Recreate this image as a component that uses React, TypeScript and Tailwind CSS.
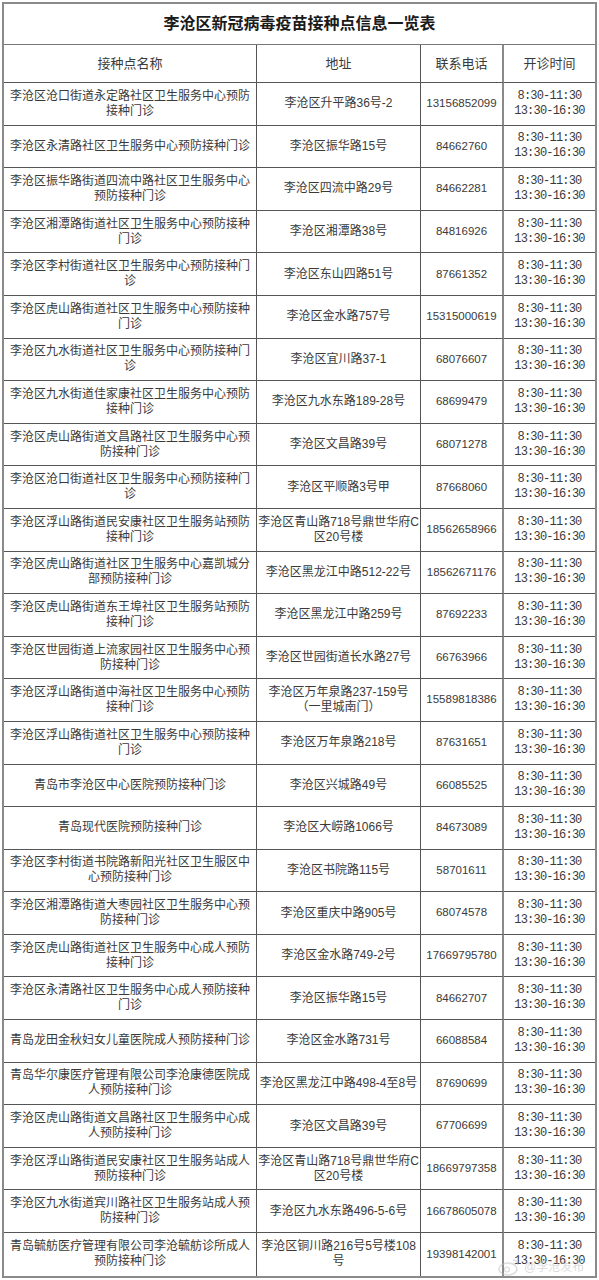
type Row = {
    name: string[];
    address: string[];
    phone: string;
};

const rows: Row[] = [
    { name: ['李沧区沧口街道永定路社区卫生服务中心预防', '接种门诊'], address: ['李沧区升平路36号-2'], phone: '13156852099' },
    { name: ['李沧区永清路社区卫生服务中心预防接种门诊'], address: ['李沧区振华路15号'], phone: '84662760' },
    { name: ['李沧区振华路街道四流中路社区卫生服务中心', '预防接种门诊'], address: ['李沧区四流中路29号'], phone: '84662281' },
    { name: ['李沧区湘潭路街道社区卫生服务中心预防接种', '门诊'], address: ['李沧区湘潭路38号'], phone: '84816926' },
    { name: ['李沧区李村街道社区卫生服务中心预防接种门', '诊'], address: ['李沧区东山四路51号'], phone: '87661352' },
    { name: ['李沧区虎山路街道社区卫生服务中心预防接种', '门诊'], address: ['李沧区金水路757号'], phone: '15315000619' },
    { name: ['李沧区九水街道社区卫生服务中心预防接种门', '诊'], address: ['李沧区宜川路37-1'], phone: '68076607' },
    { name: ['李沧区九水街道佳家康社区卫生服务中心预防', '接种门诊'], address: ['李沧区九水东路189-28号'], phone: '68699479' },
    { name: ['李沧区虎山路街道文昌路社区卫生服务中心预', '防接种门诊'], address: ['李沧区文昌路39号'], phone: '68071278' },
    { name: ['李沧区沧口街道社区卫生服务中心预防接种门', '诊'], address: ['李沧区平顺路3号甲'], phone: '87668060' },
    { name: ['李沧区浮山路街道民安康社区卫生服务站预防', '接种门诊'], address: ['李沧区青山路718号鼎世华府C', '区20号楼'], phone: '18562658966' },
    { name: ['李沧区虎山路街道社区卫生服务中心嘉凯城分', '部预防接种门诊'], address: ['李沧区黑龙江中路512-22号'], phone: '18562671176' },
    { name: ['李沧区虎山路街道东王埠社区卫生服务站预防', '接种门诊'], address: ['李沧区黑龙江中路259号'], phone: '87692233' },
    { name: ['李沧区世园街道上流家园社区卫生服务中心预', '防接种门诊'], address: ['李沧区世园街道长水路27号'], phone: '66763966' },
    { name: ['李沧区浮山路街道中海社区卫生服务中心预防', '接种门诊'], address: ['李沧区万年泉路237-159号', '（一里城南门）'], phone: '15589818386' },
    { name: ['李沧区浮山路街道社区卫生服务中心预防接种', '门诊'], address: ['李沧区万年泉路218号'], phone: '87631651' },
    { name: ['青岛市李沧区中心医院预防接种门诊'], address: ['李沧区兴城路49号'], phone: '66085525' },
    { name: ['青岛现代医院预防接种门诊'], address: ['李沧区大崂路1066号'], phone: '84673089' },
    { name: ['李沧区李村街道书院路新阳光社区卫生服区中', '心预防接种门诊'], address: ['李沧区书院路115号'], phone: '58701611' },
    { name: ['李沧区湘潭路街道大枣园社区卫生服务中心预', '防接种门诊'], address: ['李沧区重庆中路905号'], phone: '68074578' },
    { name: ['李沧区虎山路街道社区卫生服务中心成人预防', '接种门诊'], address: ['李沧区金水路749-2号'], phone: '17669795780' },
    { name: ['李沧区永清路社区卫生服务中心成人预防接种', '门诊'], address: ['李沧区振华路15号'], phone: '84662707' },
    { name: ['青岛龙田金秋妇女儿童医院成人预防接种门诊'], address: ['李沧区金水路731号'], phone: '66088584' },
    { name: ['青岛华尔康医疗管理有限公司李沧康德医院成', '人预防接种门诊'], address: ['李沧区黑龙江中路498-4至8号'], phone: '87690699' },
    { name: ['李沧区虎山路街道文昌路社区卫生服务中心成', '人预防接种门诊'], address: ['李沧区文昌路39号'], phone: '67706699' },
    { name: ['李沧区浮山路街道民安康社区卫生服务站成人', '预防接种门诊'], address: ['李沧区青山路718号鼎世华府C', '区20号楼'], phone: '18669797358' },
    { name: ['李沧区九水街道宾川路社区卫生服务站成人预', '防接种门诊'], address: ['李沧区九水东路496-5-6号'], phone: '16678605078' },
    { name: ['青岛毓舫医疗管理有限公司李沧毓舫诊所成人', '预防接种门诊'], address: ['李沧区铜川路216号5号楼108', '号'], phone: '19398142001' },
];

const font = "font-['Liberation_Sans','Noto_Sans_CJK_SC',sans-serif]";

function Lines({ lines }: { lines: string[] }) {
    return (
        <div className="leading-[15px]">
            {lines.map((line, index) => (
                <div key={index} className="whitespace-nowrap">
                    {line}
                </div>
            ))}
        </div>
    );
}

export default function App() {
    return (
        <div className={`relative min-h-[1280px] w-[599px] bg-white ${font}`}>
            <div className="ml-[2px] pt-[2px]">
                <div className="grid w-[595px] grid-cols-[253px_164px_83px_91px] grid-rows-[41px_38px_repeat(28,42.6px)] border-2 border-[#8a8a8a] text-[#3a3a3a]">
                    <div className="col-span-4 flex items-center justify-center border-b border-[#777] text-[16px] font-bold text-[#1a1a1a]">
                        李沧区新冠病毒疫苗接种点信息一览表
                    </div>

                    <div className="flex items-center justify-center border-r border-b border-[#555] text-[13px]">
                        接种点名称
                    </div>
                    <div className="flex items-center justify-center border-r border-b border-[#555] text-[13px]">
                        地址
                    </div>
                    <div className="flex items-center justify-center border-r-2 border-b border-r-[#8a8a8a] border-b-[#555] text-[13px]">
                        联系电话
                    </div>
                    <div className="flex items-center justify-center border-b border-[#555] text-[13px]">
                        开诊时间
                    </div>

                    {rows.map((row, index) => {
                        const last = index === rows.length - 1;
                        const bottom = last ? '' : 'border-b';
                        return [
                            <div
                                key={`n-${index}`}
                                className={`flex items-center justify-center border-r border-[#555] text-center text-[12px] ${bottom}`}
                            >
                                <Lines lines={row.name} />
                            </div>,
                            <div
                                key={`a-${index}`}
                                className={`flex items-center justify-center border-r border-[#555] text-center text-[12px] ${bottom}`}
                            >
                                <Lines lines={row.address} />
                            </div>,
                            <div
                                key={`p-${index}`}
                                className={`flex items-center justify-center border-r-2 border-r-[#8a8a8a] border-b-[#555] text-[11.5px] ${bottom}`}
                            >
                                {row.phone}
                            </div>,
                            <div
                                key={`t-${index}`}
                                className={`flex items-center justify-center border-[#555] font-['Liberation_Mono',monospace] text-[12px] tracking-[-0.8px] ${bottom}`}
                            >
                                <div className="text-center leading-[15px]">
                                    <div>8:30-11:30</div>
                                    <div>13:30-16:30</div>
                                </div>
                            </div>,
                        ];
                    })}
                </div>
            </div>

            <div className="pointer-events-none absolute top-[1258px] left-[498px] flex items-center gap-1 opacity-50">
                <svg width="22" height="18" viewBox="0 0 22 18" fill="none">
                    <ellipse cx="10" cy="11" rx="9" ry="6" stroke="#bbb" strokeWidth="1.5" />
                    <circle cx="9" cy="11.5" r="2.5" stroke="#bbb" strokeWidth="1.2" />
                    <path d="M15 2 a5 5 0 0 1 5 5" stroke="#bbb" strokeWidth="1.3" />
                    <path d="M15 5 a2 2 0 0 1 2 2" stroke="#bbb" strokeWidth="1.1" />
                </svg>
                <span className="text-[12px] text-[#bbb]">@李沧发布</span>
            </div>
        </div>
    );
}
